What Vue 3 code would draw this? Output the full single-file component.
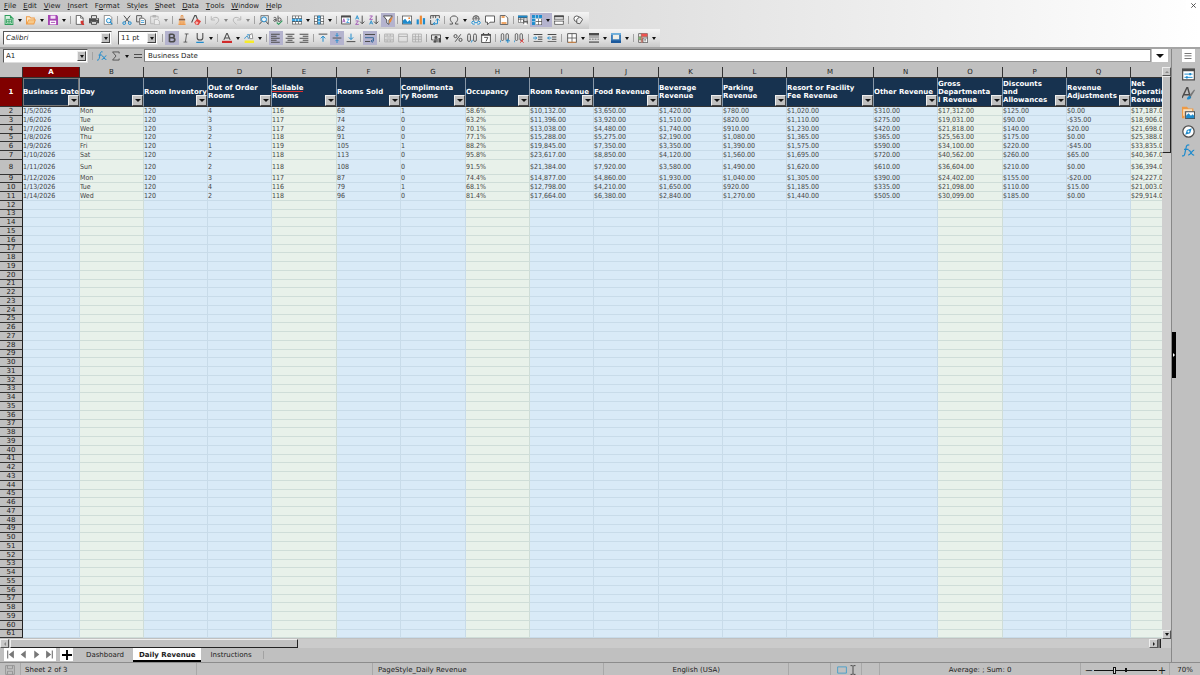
<script setup>
import { ref } from 'vue'

const K = '#4c4c4c'
const B = '#1e8bcd'
const line = (d, c = K, w = 1.4) => `<path d="${d}" fill="none" stroke="${c}" stroke-width="${w}"/>`
const fill = (d, c = K) => `<path d="${d}" fill="${c}"/>`

const icons = {
  new: fill('M1 0h9l5 5v11H1z', '#2f9e5b') + fill('M2.5 1.500h7v4h4v9h-11z', '#d9f0e0') + line('M4 7h8v6H4zM4 10h8M8 7v6', '#2f9e5b', 1.3),
  open: fill('M0 2h6l2 2h6v3h2l-3 8H0z', '#ee9a45') + fill('M1.500 3.500h4l2 2h5V7H4l-2.500 5z', '#fbe7c8') + fill('M4.500 8.500h9.500l-2 5H2.500z', '#f8c887'),
  save: fill('M0 0h14l2 2v14H0z', '#a646b4') + fill('M4 1h8v5H4z', '#f5e2f7') + fill('M3 9h10v6H3z', '#fff') + fill('M4.500 11h7v1.500h-7z', '#a646b4'),
  pdf: '<path d="M2 .7h7l4 4V15H2z" fill="#fff" stroke="#4c4c4c" stroke-width="1.300"/>' + line('M9 .7V5h4', K, 1.2) + fill('M9 9h5l-1 3 2 4h-3l-3-3z', '#d4332f'),
  print: line('M4 5V1h8v4', K, 1.5) + fill('M0 5h16v8h-3v-3H3v3H0z') + line('M4 10.500h8V15H4z', K, 1.5) + fill('M12 6h2v2h-2z', '#ddd'),
  preview: '<path d="M2 .7h9l3 3V15H2z" fill="#fff" stroke="#707070" stroke-width="1.200"/><circle cx="9" cy="9" r="3.500" fill="#e7f4fb" stroke="#1e8bcd" stroke-width="1.500"/>' + line('M11.500 11.500L15 15', B, 1.8),
  cut: line('M3 1l8 10M13 1L5 11', K, 1.6) + '<circle cx="3.500" cy="13" r="2.200" fill="none" stroke="#1e8bcd" stroke-width="1.600"/><circle cx="12.500" cy="13" r="2.200" fill="none" stroke="#1e8bcd" stroke-width="1.600"/>',
  copy: line('M5 11H1V1h8v3', K, 1.4) + '<path d="M6 5h6l3 3v7.500H6z" fill="#fff" stroke="#4c4c4c" stroke-width="1.400"/>' + line('M8 9h5M8 12h5', B, 1.2),
  paste: line('M6 14H1V2h12v4', '#b4b4b4', 1.4) + fill('M4 0h6v4H4z', '#b4b4b4') + '<path d="M7 7h5l3 3v5.500H7z" fill="#ececec" stroke="#b4b4b4" stroke-width="1.300"/>',
  clone: line('M6.500 6V1h3v5', '#e58a3c', 1.4) + fill('M3 6h10v3H3z', '#8a5a3a') + fill('M3 9h10l1 7H2z', '#f6c48d') + line('M2.500 15h11M5 10v5M8 10v5M11 10v5', '#e58a3c', 1.2),
  clear: line('M1 12L6 1h2l3 8', K, 1.7) + fill('M5 12l5-6 6 4-4 6H8z', '#e0403a') + fill('M7 12l2-2 3 2-2 3H8z', '#f6b5b0'),
  undo: line('M2 2v6h6M2.500 7.500C6 2 14 3 14 8c0 3-2 4-5 7', '#b9b9b9', 1.6),
  redo: line('M14 2v6H8M13.500 7.500C10 2 2 3 2 8c0 3 2 4 5 7', '#b9b9b9', 1.6),
  find: line('M3 10V1h12v13', K, 1.1) + '<circle cx="8" cy="7" r="4" fill="#eaf4fa" stroke="#1e8bcd" stroke-width="1.600"/>' + line('M5 10l-4.500 5M11 10l4 5', K, 1.6),
  spell: line('M1 4.500c3-2 4 0 4 1v5M5 7C1 6 0 10 2.500 10.200 4 10 5 9 5 8M8 1v9.500M8 6c1-2 5-2 5 1.500S9 11 8 9', K, 1.4) + line('M6 12l3 3 6-6', '#2e9c5c', 1.7),
  row: fill('M0 1h16v14H0z') + fill('M1 2h4v3H1zM6 2h4v3H6zM11 2h4v3h-4zM1 11h4v3H1zM6 11h4v3H6zM11 11h4v3h-4z', '#fff') + fill('M0 6h16v4H0z', '#3aa3e0') + line('M5.500 6v4M10.500 6v4', '#fff', 1),
  col: fill('M0 1h16v14H0z') + fill('M1 2h4v3H1zM1 6h4v4H1zM1 11h4v3H1zM11 2h4v3h-4zM11 6h4v4h-4zM11 11h4v3h-4z', '#fff') + fill('M6 1h4v14H6z', '#3aa3e0') + line('M6 5.500h4M6 10.500h4', '#fff', 1),
  sort: '<path d="M.7 1.700h14.600v12.600H.7z" fill="#fff" stroke="#4c4c4c" stroke-width="1.400"/>' + fill('M0 1h16v3H0z') + line('M2.500 12l2-6 2 6M3 10h3', '#9a46b0', 1.2) + line('M9 6.500h4L9 12h4.500', B, 1.2),
  asc: line('M1 7l2.500-6L6 7M2 5h3', B, 1.3) + line('M1 9.500h4.500L1 15h5', '#9a46b0', 1.3) + line('M11.500 1v13M8 10.500l3.500 3.500 3.500-3.500', K, 1.5),
  desc: line('M1 1.500h4.500L1 7h5', '#9a46b0', 1.3) + line('M1 15l2.500-6L6 15M2 13h3', B, 1.3) + line('M11.500 1v13M8 10.500l3.500 3.500 3.500-3.500', K, 1.5),
  filter: '<path d="M.8 1.500h14L9.500 8v7L6 12.500V8z" fill="#fff" stroke="#4c4c4c" stroke-width="1.500"/>' + fill('M10 8l6-6-3 8-3 4z', '#ec8a36'),
  image: fill('M0 1h16v14H0z') + fill('M1.200 2.200h13.600v11.600H1.200z', '#fff') + fill('M1.200 13.800V9L5 6l4 5 3-3 2.800 3v2.800z', B) + '<circle cx="11.500" cy="5" r="1.500" fill="#ec8a36"/>',
  chart: fill('M1 7h3.500v8H1z', B) + fill('M6 1h3.500v14H6z', '#ec8a36') + fill('M11 5h3.500v10H11z', B),
  pivot: line('M1 6V1h14v4M1 8v7h4M5 1v4M9 1v4', K, 1.5) + line('M5 14h7V6M9.500 9L12 6l3 3M8 11l-3 3 3 2', B, 1.5),
  omega: line('M1 14.500h4.500v-2C0 8 1.500 1.500 8 1.500S16 8 10.500 12.500v2H15', K, 1.5),
  link: '<circle cx="8" cy="6" r="5" fill="none" stroke="#4c4c4c" stroke-width="1.400"/>' + line('M3 6h10M8 1v9M5 2.500c2 2 4 2 6 0', K, 1) + fill('M0 9h16v7H0z', '#ececec') + line('M6 10H3.500a2.300 2.300 0 000 4.600H6M10 10h2.500a2.300 2.300 0 010 4.600H10M5 12.300h6', B, 1.6),
  comment: '<path d="M.8 1.500h14.400v10H8l-4 4v-4H.8z" fill="#fff" stroke="#4c4c4c" stroke-width="1.400"/>',
  headfoot: '<path d="M2 .8h8l4 4v10.400H2z" fill="#fff" stroke="#4c4c4c" stroke-width="1.300"/>' + fill('M4 2h5v2.500H4zM4 11.500h8V14H4z', '#ec8a36'),
  printarea: fill('M0 1h15v11H0z', '#4c4c4c') + fill('M0 1h15v3H0z', B) + fill('M1 5h3v2H1zM5 5h4v2H5zM10 5h4v2h-4zM1 8h3v3H1zM5 8h3v3H5z', '#fff') + fill('M8 9h8v5H8z', '#666') + fill('M10 12h4v4h-4zM10 7h4v2h-4z', '#fff'),
  freeze: fill('M0 0h16v16H0z', '#4c4c4c') + fill('M0 0h16v5H0zM0 5h5v11H0z', '#1e8bcd') + fill('M6 6h4v4H6zM11 6h4v4h-4zM6 11h4v4H6zM11 11h4v4h-4z', '#fff') + line('M5.500 0v16M0 5.500h16M10.500 0v5M0 10.500h5', '#d5ebf8', 1),
  split: '<path d="M1 1h14v14H1z" fill="#fff"/>' + fill('M0 7h16v2H0z', '#ddd') + line('M1 7V1h14v6M1 9.500V15h14V9.500', K, 1.2) + fill('M0 1h16v2.500H0zM0 6h16v1.200H0zM0 9h16v1.200H0z'),
  shapes: '<circle cx="6" cy="6" r="4.500" fill="#fff" stroke="#4c4c4c" stroke-width="1.400"/><path d="M6 7l5-4 4.500 4-4.500 7-5-1z" fill="#ececec" stroke="#4c4c4c" stroke-width="1.400"/>',
  bold: line('M4 1.500v13M4 2h4.500c4 0 4 5.500 0 5.500H4M8 7.500c6 0 6 6.500 0 6.500H4', K, 2.6),
  italic: line('M6 1.500h6M4 14.500h6M9 1.500L7 14.500', K, 1.3),
  underline: line('M3.500 0v7.500c0 5 9 5 9 0V0', K, 1.7) + fill('M2 14h12v2H2z', B),
  fontcolor: line('M3 11L7.500 1h1L13 11M4.500 8h7', K, 1.7) + fill('M0 12.500h16V16H0z', '#d02a2a'),
  highlight: line('M1 9c3-5 5-5 6 0M5 3h4v5', B, 1.6) + '<path d="M9 9V3l4-2 1 8z" fill="#fff" stroke="#777" stroke-width="1.200"/>' + fill('M1 12h15v4H1z', '#f7ec2a'),
  left: fill('M0 1h14v1.600H0zM0 4.200h9v1.600H0zM0 7.400h14V9H0zM0 10.600h9v1.600H0zM0 13.800h14v1.600H0z'),
  center: fill('M1 1h14v1.600H1zM4 4.200h8v1.600H4zM1 7.400h14V9H1zM4 10.600h8v1.600H4zM1 13.800h14v1.600H1z'),
  right: fill('M1 1h14v1.600H1zM6 4.200h9v1.600H6zM1 7.400h14V9H1zM6 10.600h9v1.600H6zM1 13.800h14v1.600H1z'),
  top: fill('M1 1h14v1.600H1z') + line('M8 14V5M4.500 8.500L8 5l3.500 3.500', B, 1.6),
  middle: fill('M1 7.300h14v1.500H1z') + line('M8 0v5M5.500 3L8 5.500 10.500 3M8 16v-5M5.500 13L8 10.500l2.500 2.500', B, 1.5),
  bottom: fill('M1 13h14v1.600H1z') + line('M8 1v9M4.500 7L8 10.500 11.500 7', B, 1.6),
  wrap: fill('M0 1.500h16v1.600H0zM0 12.800h8v1.600H0z') + line('M0 7.500h13.500v5.500H10M12 10.500L9.500 13l2.500 2.500', '#38699b', 1.6),
  merge: line('M1 1.700h14v12.600H1zM1 5h14M1 11h14M5 1.700v3.300M10 1.700v3.300M5 11v3.300M10 11v3.300M4 8h8', '#ababab', 1.3),
  merge2: line('M1 1.700h14v12.600H1zM1 5.500h14', '#ababab', 1.4),
  merge3: line('M1 1.700h14v12.600H1zM1 6h14M1 10h14M5.500 1.700v12.600M10.500 1.700v12.600', '#ababab', 1.3),
  currency: line('M.8 3h14.400v7M.8 3v8H4', K, 1.5) + '<circle cx="8" cy="7" r="2.500" fill="#4c4c4c"/>' + fill('M5 9h6v6H5z', '#777') + fill('M12 8h4v7h-4zM4 12h4v3H4z'),
  percent: line('M12.500 2l-9 12', K, 1.5) + '<circle cx="4" cy="5" r="2.500" fill="none" stroke="#4c4c4c" stroke-width="1.500"/><circle cx="12" cy="11" r="2.500" fill="none" stroke="#4c4c4c" stroke-width="1.500"/>',
  number: '<rect x="1" y="1.500" width="4.500" height="12" rx="2.200" fill="none" stroke="#4c4c4c" stroke-width="1.400"/><rect x="10.500" y="1.500" width="4.500" height="12" rx="2.200" fill="none" stroke="#4c4c4c" stroke-width="1.400"/>' + line('M8.500 11l-1.500 4', B, 1.5),
  date: '<path d="M1 2.500h14v12.800H1z" fill="#fff" stroke="#4c4c4c" stroke-width="1.500"/>' + fill('M0 2h16v2.500H0zM3 0h2v3H3zM11 0h2v3h-2z') + line('M5 7h6l-3 6.500', K, 1.5),
  adddec: '<rect x="2" y="1" width="4" height="11" rx="2" fill="none" stroke="#4c4c4c" stroke-width="1.300"/><rect x="9.500" y="1" width="4" height="11" rx="2" fill="none" stroke="#4c4c4c" stroke-width="1.300"/>' + line('M1 12l-1 3M12.500 9v7M9 12.500h7', B, 1.5),
  deldec: '<rect x="2" y="1" width="4" height="11" rx="2" fill="none" stroke="#4c4c4c" stroke-width="1.300"/><rect x="9.500" y="1" width="4" height="11" rx="2" fill="none" stroke="#4c4c4c" stroke-width="1.300"/>' + line('M1 12l-1 3', B, 1.5) + line('M9.500 10l6 5.500M15.500 10l-6 5.500', '#dc3b3b', 1.5),
  indent: fill('M1 1.500h14V3H1zM8 5.500h7V7H8zM8 9.200h7v1.500H8zM1 13h14v1.500H1z') + line('M0 8h6M3.500 5.500L6 8l-2.500 2.500', B, 1.4),
  outdent: fill('M1 1.500h14V3H1zM8 5.500h7V7H8zM8 9.200h7v1.500H8zM1 13h14v1.500H1z') + line('M7 8H1M3.500 5.500L1 8l2.500 2.500', B, 1.4),
  borders: '<path d="M1 1h14v14H1z" fill="#fff" stroke="#4c4c4c" stroke-width="1.400"/>' + line('M8 1v14M1 8h14', K, 1.2) + line('M2 14.800h12', '#ec8a36', 1.4),
  bstyle: fill('M0 0h16v4H0z') + fill('M0 5.500h16V7H0zM0 13h16v3H0z', '#777') + fill('M0 9h3v1.500H0zM4.500 9h3v1.500h-3zM9 9h3v1.500H9zM13.500 9H16v1.500h-2.500z'),
  bcolor: fill('M0 0h16v16H0z', '#3b7cb8') + fill('M0 0h16v3H0z', '#6fb0dc') + fill('M3 3h10v7H3z', '#efefe8') + fill('M0 12h16v4H0z', '#1c599c'),
  condfmt: '<path d="M1 1h14v14H1z" fill="#fff" stroke="#4c4c4c" stroke-width="1.200"/>' + fill('M5 1h10v5H5z', '#ef5350') + fill('M1 6h4v5H1z', '#7bbd7b') + fill('M5 6h3v9H5z', '#ef8a80') + line('M5 1v14M1 6h14M1 11h6', '#865', 1) + '<path d="M8 8h7.500v7.500H8z" fill="#fff" stroke="#4c4c4c" stroke-width="1.200"/>' + line('M10 12.500h3M10 10.500h3', K, 1),
  fx: line('M0 14.500c3 1 3.500-2 4-5l1-5c.5-3 2-4 4-3M2.500 6.500H8M8 8c3-1 3 6.500 7 5.500M15 7.500c-3 0-4 6.500-7.500 6', B, 1.5),
  sum: line('M13 4V1.500H2.500L8 8l-5.500 6.500H13V12', K, 1.4),
  equal: fill('M0 4h16v2.200H0zM0 10h16v2.200H0z'),
  menu: fill('M1 2h14v1.500H1zM1 7.200h14v1.500H1zM1 12.400h14v1.500H1z'),
  props: '<path d="M.8 1.500h14.400v13H.8z" fill="#fff" stroke="#4c4c4c" stroke-width="1.500"/>' + fill('M0 1h16v3H0z') + line('M3 7.500h10M3 11.500h10', B, 1.2) + fill('M9 6h2v3H9zM5 10h2v3H5z', B),
  styles: line('M0 13.500L6 1h1l3.500 12.500M2.500 9.500h7', K, 1.7) + fill('M9 10l6-7 1 1-5 8z', '#777') + fill('M6 15c1-4 3-5 5-3 0 3-2 4-5 3z', B),
  gallery: fill('M0 1h6l2 2h6v3H3v9H0z', '#ee9a45') + fill('M1.500 4h11v2H3v6H1.500z', '#fbe3c0') + '<path d="M4.500 7h11v8.300h-11z" fill="#fff" stroke="#4c4c4c" stroke-width="1.300"/>' + fill('M5 15v-3l3-3 3 3 2-2 2 2v3z', B),
  nav: '<circle cx="8" cy="8" r="7" fill="#fff" stroke="#4c4c4c" stroke-width="1.500"/>' + fill('M12 4l-2 6-6 2 2-6z', B) + '<circle cx="8" cy="8" r="1.200" fill="#fff"/>',
  close: line('M3 3l10 10M13 3L3 13', '#444', 2),
  first: fill('M2 1h2v14H2zM14 1v14L5 8z', '#777'),
  prev: fill('M12 1v14L3 8z', '#777'),
  next: fill('M4 1v14l9-7z', '#777'),
  last: fill('M12 1h2v14h-2zM2 1v14l9-7z', '#777'),
  plus: fill('M6.500 0h3v6.500H16v3H9.500V16h-3V9.500H0v-3h6.500z', '#000'),
  doc: line('M1 1h14v14H1zM4 1v5h8V1M4 15v-5h8v5', '#909090', 1.4),
  selrect: line('M1 3h14v10H1z', '#4b9fc9', 1.5),
  ibeam: line('M4 1h3l1 1 1-1h3M8 2v12M4 15h3l1-1 1 1h3', '#333', 1.3),
}

// the letter after "_" is the keyboard mnemonic
const menus = ['_File', '_Edit', '_View', '_Insert', 'F_ormat', 'St_yles', '_Sheet', '_Data', '_Tools', '_Window', '_Help'].map((m) => {
  const [pre, post] = m.split('_')
  return { pre, key: post[0], post: post.slice(1) }
})
// "name" plain button, "name+" with drop-down arrow, "*" pressed, "~" disabled, "|" separator
const parse = (s) =>
  s.split(' ').map((t) => ({
    sep: t === '|',
    name: t.replace(/[+*~]/g, ''),
    drop: t.includes('+'),
    on: t.includes('*'),
    off: t.includes('~'),
  }))
const bar1 = parse('new+ open+ save+ | pdf print preview | cut copy paste+~ | clone clear | undo+~ redo+~ | find spell | row+ col+ | sort asc desc filter* | image chart pivot | omega+ link comment headfoot | printarea freeze+* split | shapes')
const bar2 = parse('bold* italic underline+ | fontcolor+ highlight+ | left* center right | top middle* bottom | wrap* | merge~ merge2~ merge3~ | currency+ percent number date | adddec deldec | indent outdent | borders+ bstyle+ bcolor+ | condfmt+')

const columns = [
  { id: 'A', w: 57, head: ['Business Date'] },
  { id: 'B', w: 64, head: ['Day'], calc: true },
  { id: 'C', w: 64, head: ['Room Inventory'] },
  { id: 'D', w: 64, head: ['Out of Order', 'Rooms'] },
  { id: 'E', w: 65, head: ['Sellable', 'Rooms'], calc: true, typo: true },
  { id: 'F', w: 64, head: ['Rooms Sold'] },
  { id: 'G', w: 65, head: ['Complimenta', 'ry Rooms'] },
  { id: 'H', w: 64, head: ['Occupancy'], calc: true },
  { id: 'I', w: 64, head: ['Room Revenue'] },
  { id: 'J', w: 65, head: ['Food Revenue'] },
  { id: 'K', w: 64, head: ['Beverage', 'Revenue'] },
  { id: 'L', w: 64, head: ['Parking', 'Revenue'] },
  { id: 'M', w: 87, head: ['Resort or Facility', 'Fee Revenue'] },
  { id: 'N', w: 64, head: ['Other Revenue'] },
  { id: 'O', w: 65, head: ['Gross', 'Departmenta', 'l Revenue'], calc: true },
  { id: 'P', w: 64, head: ['Discounts', 'and', 'Allowances'] },
  { id: 'Q', w: 64, head: ['Revenue', 'Adjustments'] },
  { id: '', w: 64, head: ['Net', 'Operating', 'Revenue'], calc: true },
]
const data = `1/5/2026 Mon 120 4 116 68 1 58.6% $10,132.00 $3,650.00 $1,420.00 $780.00 $1,020.00 $310.00 $17,312.00 $125.00 $0.00 $17,187.00
1/6/2026 Tue 120 3 117 74 0 63.2% $11,396.00 $3,920.00 $1,510.00 $820.00 $1,110.00 $275.00 $19,031.00 $90.00 -$35.00 $18,906.00
1/7/2026 Wed 120 3 117 82 0 70.1% $13,038.00 $4,480.00 $1,740.00 $910.00 $1,230.00 $420.00 $21,818.00 $140.00 $20.00 $21,698.00
1/8/2026 Thu 120 2 118 91 0 77.1% $15,288.00 $5,275.00 $2,190.00 $1,080.00 $1,365.00 $365.00 $25,563.00 $175.00 $0.00 $25,388.00
1/9/2026 Fri 120 1 119 105 1 88.2% $19,845.00 $7,350.00 $3,350.00 $1,390.00 $1,575.00 $590.00 $34,100.00 $220.00 -$45.00 $33,835.00
1/10/2026 Sat 120 2 118 113 0 95.8% $23,617.00 $8,850.00 $4,120.00 $1,560.00 $1,695.00 $720.00 $40,562.00 $260.00 $65.00 $40,367.00
1/11/2026 Sun 120 2 118 108 0 91.5% $21,384.00 $7,920.00 $3,580.00 $1,490.00 $1,620.00 $610.00 $36,604.00 $210.00 $0.00 $36,394.00
1/12/2026 Mon 120 3 117 87 0 74.4% $14,877.00 $4,860.00 $1,930.00 $1,040.00 $1,305.00 $390.00 $24,402.00 $155.00 -$20.00 $24,227.00
1/13/2026 Tue 120 4 116 79 1 68.1% $12,798.00 $4,210.00 $1,650.00 $920.00 $1,185.00 $335.00 $21,098.00 $110.00 $15.00 $21,003.00
1/14/2026 Wed 120 2 118 96 0 81.4% $17,664.00 $6,380.00 $2,840.00 $1,270.00 $1,440.00 $505.00 $30,099.00 $185.00 $0.00 $29,914.00`
  .split('\n')
  .map((r) => r.split(' '))
const rows = Array.from({ length: 60 }, (_, i) => ({ n: i + 2, cells: data[i] || columns.map(() => '') }))

const formula = ref('Business Date')
const zoom = ref(31)
const sideTools = ['menu', 'props', 'styles', 'gallery', 'nav', 'fx']
</script>

<template>
  <div class="app">
    <header class="top">
      <nav class="menubar">
        <button v-for="m in menus" :key="m.post">{{ m.pre }}<u>{{ m.key }}</u>{{ m.post }}</button>
        <button class="close" aria-label="Close document"><svg viewBox="0 0 16 16" v-html="icons.close" /></button>
      </nav>
      <div class="toolbar standard">
        <template v-for="(t, i) in bar1" :key="i">
          <i v-if="t.sep" class="sep" />
          <button v-else class="tool" :class="{ drop: t.drop, on: t.on, off: t.off }" :aria-label="t.name">
            <svg viewBox="0 0 16 16" v-html="icons[t.name]" /><b v-if="t.drop" class="arrow" />
          </button>
        </template>
      </div>
      <div class="toolbar format">
        <div class="combo fontname">
          <input value="Calibri" aria-label="Font name" /><button aria-label="Font list"><b class="arrow" /></button>
        </div>
        <div class="combo fontsize">
          <input value="11 pt" aria-label="Font size" /><button aria-label="Size list"><b class="arrow" /></button>
        </div>
        <i class="sep" />
        <div class="tools">
          <template v-for="(t, i) in bar2" :key="i">
            <i v-if="t.sep" class="sep" />
            <button v-else class="tool" :class="{ drop: t.drop, on: t.on, off: t.off }" :aria-label="t.name">
              <svg viewBox="0 0 16 16" v-html="icons[t.name]" /><b v-if="t.drop" class="arrow" />
            </button>
          </template>
        </div>
      </div>
    </header>

    <div class="body">
      <main class="main">
        <div class="formulabar">
          <div class="combo namebox">
            <input value="A1" aria-label="Name box" /><button aria-label="Names"><b class="arrow" /></button>
          </div>
          <i class="sep" />
          <button class="tool" aria-label="Function wizard"><svg viewBox="0 0 16 16" v-html="icons.fx" /></button>
          <button class="tool drop" aria-label="Select function"><svg viewBox="0 0 16 16" v-html="icons.sum" /><b class="arrow" /></button>
          <button class="tool equal" aria-label="Formula"><svg viewBox="0 0 16 16" v-html="icons.equal" /></button>
          <input v-model="formula" class="formula" aria-label="Formula input" />
          <button class="expand" aria-label="Expand formula bar"><b class="arrow" /></button>
        </div>

        <div class="pane">
          <div class="grid">
            <table>
              <colgroup>
                <col class="rowcol" />
                <col v-for="c in columns" :key="c.id" :style="{ width: c.w + 'px' }" />
              </colgroup>
              <thead>
                <tr class="letters">
                  <th />
                  <th v-for="c in columns" :key="c.id" :class="{ sel: c.id === 'A' }">{{ c.id }}</th>
                </tr>
                <tr class="titles">
                  <th class="num sel">1</th>
                  <th v-for="c in columns" :key="c.id" class="title" :class="{ cursor: c.id === 'A' }">
                    <span v-for="(l, i) in c.head" :key="i"><em :class="{ typo: c.typo && !i }">{{ l }}</em></span>
                    <button class="filter" :aria-label="'Filter ' + c.head.join(' ')"><b class="arrow" /></button>
                  </th>
                </tr>
              </thead>
              <tbody>
                <tr v-for="r in rows" :key="r.n" :class="{ tall: r.n === 8, short: r.n % 4 === 1 }">
                  <th class="num">{{ r.n }}</th>
                  <td v-for="(c, i) in columns" :key="c.id" :class="{ calc: c.calc }">{{ r.cells[i] }}</td>
                </tr>
              </tbody>
            </table>
          </div>
          <div class="vscroll">
            <button aria-label="Scroll up"><b class="arrow up" /></button>
            <div class="thumb" />
            <span class="space" />
            <button aria-label="Scroll down"><b class="arrow" /></button>
          </div>
        </div>
        <div class="hscroll">
          <button aria-label="Scroll left"><b class="arrow side back" /></button>
          <div class="thumb" />
          <span class="space" />
          <button aria-label="Scroll right"><b class="arrow side" /></button>
          <i class="grip" />
        </div>
        <div class="tabs">
          <div class="tabnav">
            <button v-for="n in ['first', 'prev', 'next', 'last']" :key="n" :aria-label="n"><svg viewBox="0 0 16 16" v-html="icons[n]" /></button>
          </div>
          <button class="add" aria-label="Add sheet"><svg viewBox="0 0 16 16" v-html="icons.plus" /></button>
          <button class="tab">Dashboard</button>
          <button class="tab active">Daily Revenue</button>
          <button class="tab">Instructions</button>
          <i class="sep" />
        </div>
      </main>
      <aside class="sidebar">
        <button v-for="s in sideTools" :key="s" :class="s" :aria-label="s"><svg viewBox="0 0 16 16" v-html="icons[s]" /></button>
        <button class="handle" aria-label="Show sidebar"><b class="arrow side" /></button>
      </aside>
    </div>

    <footer class="status">
      <span class="doc"><svg viewBox="0 0 16 16" v-html="icons.doc" /></span>
      <span class="sheet">Sheet 2 of 3</span>
      <span class="gap" />
      <span class="page">PageStyle_Daily Revenue</span>
      <span class="lang">English (USA)</span>
      <span class="blank" />
      <span class="mode"><svg viewBox="0 0 16 16" v-html="icons.selrect" /><svg viewBox="0 0 16 16" v-html="icons.ibeam" /></span>
      <span class="sign" />
      <span class="sum">Average: ; Sum: 0</span>
      <span class="zoom">
        <button aria-label="Zoom out">−</button>
        <input v-model="zoom" type="range" min="0" max="100" aria-label="Zoom" />
        <button aria-label="Zoom in">+</button>
      </span>
      <span class="pct">70%</span>
    </footer>
  </div>
</template>

<style>
html,
body,
#app {
  height: 100%;
}
body {
  margin: 0;
}
</style>

<style scoped>
* {
  box-sizing: border-box;
}
.app {
  height: 100%;
  display: flex;
  flex-direction: column;
  overflow: hidden;
  background: #c0c0c0;
  color: #1c1c1c;
  font: 7px/9px 'DejaVu Sans', sans-serif;
}
button {
  border: 0;
  padding: 0;
  margin: 0;
  background: none;
  color: inherit;
  font: inherit;
  display: flex;
  align-items: center;
  justify-content: center;
  flex: none;
}
input {
  border: 0;
  padding: 0;
  margin: 0;
  min-width: 0;
  background: none;
  color: inherit;
  font: inherit;
  outline: 0;
}
svg {
  width: 10px;
  height: 10px;
  display: block;
  flex: none;
}
.arrow {
  width: 0;
  height: 0;
  border: 2px solid transparent;
  border-top: 3px solid #111;
  border-bottom: 0;
  flex: none;
}
.arrow.up {
  border-top: 0;
  border-bottom: 2px solid #888;
}
.arrow.side {
  border: 2px solid transparent;
  border-left: 2px solid #222;
  border-right: 0;
}
.arrow.back {
  border-left: 0;
  border-right: 2px solid #888;
}
.sep {
  width: 5px;
  height: 8px;
  flex: none;
  background: linear-gradient(#a2a2a2, #a2a2a2) center / 1px 100% no-repeat;
}

.top {
  flex: none;
  background: linear-gradient(90deg, #c0c0c0, #dedede 50%, #fff);
  border-bottom: 2px solid #a4a4a4;
}
.menubar {
  height: 12px;
  display: flex;
  gap: 7px;
  padding-left: 4px;
}
.menubar u {
  text-underline-offset: 1px;
}
.menubar .close {
  margin-left: auto;
  width: 14px;
  height: 11px;
  background: #fff;
}
.close svg {
  width: 7px;
  height: 7px;
}
.toolbar {
  display: flex;
  align-items: center;
  width: max-content;
  background: linear-gradient(#f4f4f4, #dfdfdf 60%, #cacaca);
}
.standard {
  height: 17px;
  padding: 0 4px 1px 2px;
}
.format {
  height: 18px;
  width: 660px;
  padding: 0 2px 0 3px;
}
.tools {
  flex: 1;
  display: flex;
  align-items: center;
  justify-content: space-between;
}
.tool {
  width: 14px;
  height: 14px;
}
.tool.drop {
  width: 22px;
  justify-content: flex-start;
  padding-left: 2px;
  gap: 4px;
}
.tool.on {
  background: #b4b3ce;
}
.tool.off .arrow {
  border-top-color: #888;
}
.combo {
  height: 14px;
  display: flex;
  background: #fff;
  border: 1px solid #555;
  border-right-color: #ddd;
  border-bottom-color: #ddd;
  padding: 1px;
  flex: none;
}
.combo input {
  flex: 1;
  padding-left: 1px;
}
.combo button {
  width: 9px;
  background: #c0c0c0;
  border: 1px solid;
  border-color: #eee #444 #444 #eee;
}
.fontname {
  width: 109px;
  margin-right: 6px;
}
.fontname input {
  font-style: italic;
}
.fontsize {
  width: 40px;
  margin-right: 2px;
}

.body {
  flex: 1;
  min-height: 0;
  display: flex;
}
.main {
  flex: 1;
  min-width: 0;
  display: flex;
  flex-direction: column;
}
.formulabar {
  height: 18px;
  flex: none;
  display: flex;
  align-items: flex-start;
  padding: 0 3px;
}
.formulabar .sep {
  margin: 3px 0 0 2px;
}
.namebox {
  width: 85px;
}
.formulabar .equal {
  width: 13px;
}
.equal svg {
  width: 8px;
  height: 8px;
}
.formula {
  flex: 1;
  height: 13px;
  padding-left: 3px;
  background: #fff;
  border: 1px solid #888;
  border-color: #777 #999 #999 #777;
}
.expand {
  width: 16px;
  height: 13px;
  margin-left: 1px;
  background: #fff;
}
.expand .arrow {
  border-width: 4px 4px 0;
}

.pane {
  flex: 1;
  min-height: 0;
  display: flex;
}
.grid {
  flex: 1;
  min-width: 0;
  overflow: hidden;
}
table {
  table-layout: fixed;
  width: 1195px;
  border-collapse: separate;
  border-spacing: 0;
}
.rowcol {
  width: 23px;
}
th,
td {
  padding: 0;
  white-space: nowrap;
  overflow: hidden;
}
.letters th {
  height: 11px;
  line-height: 9px;
  padding-top: 1px;
  font-weight: 400;
  border-right: 1px solid #333;
  border-bottom: 1px solid #333;
}
.letters .sel,
.num.sel {
  background: #800000;
  color: #fff;
  font-weight: 700;
}
.num {
  font-weight: 400;
  line-height: 7px;
  border-right: 1px solid #222;
  border-bottom: 1px solid #333;
  background: #c0c0c0;
}
.titles th {
  height: 29px;
}
.title {
  position: relative;
  text-align: left;
  vertical-align: middle;
  background: #17324f;
  color: #fff;
  font-weight: 700;
  line-height: 8px;
  border-right: 1px solid #8796a6;
  border-bottom: 1px solid #333;
}
.title.cursor {
  box-shadow: inset 0 0 0 1px #777;
}
.title span {
  display: block;
}
.title em {
  font-style: normal;
}
.typo {
  background: linear-gradient(#e03030, #e03030) bottom / 100% 1px no-repeat;
}
.filter {
  position: absolute;
  right: 0;
  bottom: 0;
  width: 11px;
  height: 11px;
  background: #c0c0c0;
  border: 1px solid;
  border-color: #eee #444 #444 #eee;
}
.filter .arrow {
  border-width: 3px 3px 0;
}
td {
  height: 9px;
  line-height: 7px;
  font-family: 'DejaVu Sans Condensed', 'Noto Sans', sans-serif;
  color: #444;
  background: #d9eaf7;
  border-right: 1px solid #c8dbe9;
  border-bottom: 1px solid #c8dbe9;
}
td.calc {
  background: #e8f1ea;
  border-color: #cfddd8;
}
.short td {
  height: 8px;
}
.tall td {
  height: 15px;
}
.vscroll {
  width: 9px;
  display: flex;
  flex-direction: column;
  background: #cfcfcf;
  flex: none;
}
.vscroll button,
.hscroll button {
  width: 9px;
  height: 9px;
  background: #c8c8c8;
  border: 1px solid;
  border-color: #eee #555 #555 #eee;
}
.vscroll .thumb {
  height: 77px;
  background: #c0c0c0;
  border: 1px solid;
  border-color: #eee #222 #222 #eee;
}
.space {
  flex: 1;
}
.hscroll {
  height: 9px;
  flex: none;
  display: flex;
  padding-right: 10px;
  background: #cbcbcb;
}
.hscroll .thumb {
  width: 288px;
  margin-left: 1px;
  background: #c0c0c0;
  border: 1px solid;
  border-color: #eee #222 #222 #eee;
}
.grip {
  width: 3px;
  background: #777;
  border-right: 1px solid #222;
}
.tabs {
  height: 14px;
  flex: none;
  display: flex;
  align-items: flex-start;
  padding-left: 4px;
}
.tabnav {
  display: flex;
  background: #fff;
}
.tabnav button {
  width: 13px;
  height: 13px;
}
.tabnav svg {
  width: 9px;
  height: 9px;
}
.add {
  width: 13px;
  height: 13px;
  margin: 0 4px;
  background: #fff;
}
.tab {
  height: 14px;
  padding: 0 9px;
}
.tab.active {
  padding: 2px 6px 0;
  background: #fff;
  font-weight: 700;
  border-bottom: 2px solid #000;
}
.tabs .sep {
  margin-top: 3px;
}
.sidebar {
  width: 29px;
  flex: none;
  position: relative;
  display: flex;
  flex-direction: column;
  align-items: center;
  gap: 6px;
  padding-left: 4px;
  border-left: 1px solid #888;
}
.sidebar svg {
  width: 13px;
  height: 13px;
}
.sidebar .menu {
  width: 13px;
  height: 13px;
  background: #fff;
}
.sidebar .menu svg {
  width: 8px;
  height: 8px;
}
.sidebar .handle {
  position: absolute;
  left: 0;
  top: 283px;
  width: 4px;
  height: 46px;
  background: #000;
}
.handle .arrow.side {
  border-left-color: #fff;
}

.status {
  height: 13px;
  flex: none;
  display: flex;
  align-items: stretch;
  border-top: 1px solid #8c8c8c;
}
.status > span {
  display: flex;
  align-items: center;
  border-left: 1px solid #a8a8a8;
  padding-top: 2px;
  white-space: nowrap;
}
.status .doc {
  width: 20px;
  justify-content: center;
  border: 0;
}
.status .sheet {
  width: 176px;
  padding-left: 4px;
}
.status .gap {
  width: 176px;
}
.status .page {
  flex: 229;
  padding-left: 5px;
}
.status .lang {
  flex: 187;
  justify-content: center;
}
.status .blank {
  width: 42px;
}
.status .mode {
  width: 31px;
  padding-left: 5px;
}
.mode svg:first-child {
  width: 12px;
}
.status .sign {
  width: 18px;
}
.status .sum {
  flex: 203;
  justify-content: center;
}
.status .zoom {
  width: 89px;
  padding: 2px 2px 0 3px;
}
.zoom button {
  width: 10px;
  font-size: 10px;
}
.zoom input {
  appearance: none;
  flex: 1;
  height: 7px;
  background:
    linear-gradient(#111, #111) center / 2px 4px no-repeat,
    linear-gradient(#111, #111) center / 100% 1px no-repeat;
}
.zoom input::-webkit-slider-thumb {
  appearance: none;
  width: 3px;
  height: 7px;
  background: #ddd;
  border: 1px solid #111;
}
.status .pct {
  width: 31px;
  justify-content: center;
}
</style>
